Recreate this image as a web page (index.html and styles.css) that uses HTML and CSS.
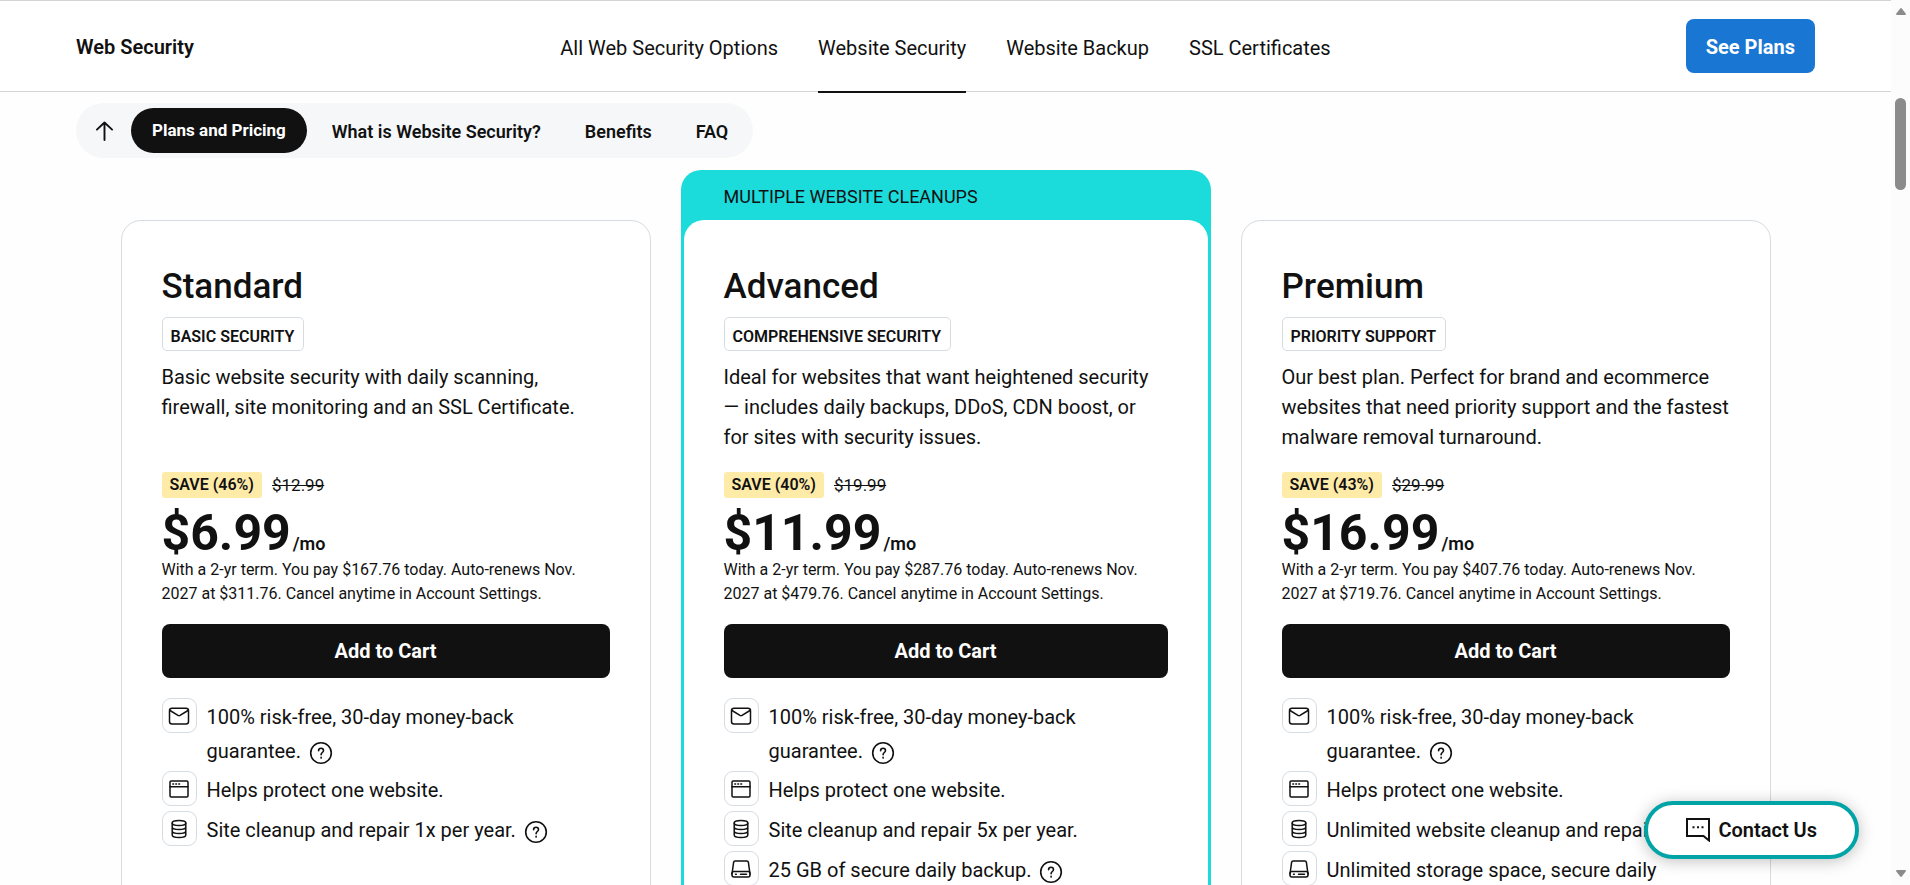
FILE: index.html
```html
<!DOCTYPE html>
<html lang="en">
<head>
<meta charset="utf-8">
<meta name="viewport" content="width=device-width, initial-scale=1">
<title>Website Security</title>
<link rel="stylesheet" href="styles.css">
</head>
<body>
<svg class="sprite" aria-hidden="true">
  <symbol id="mail" viewBox="0 0 24 24"><rect x="2.500" y="4.200" width="19" height="15.800" rx="2.500"/><path d="M3 6.500l8 4.900a2 2 0 0 0 2 0l8-4.900"/></symbol>
  <symbol id="window" viewBox="0 0 24 24"><rect x="3" y="4" width="18" height="16" rx="1.200"/><path d="M3 9.800h18M5.800 6.900h.8M8.800 6.900h.8M11.800 6.900h.8"/></symbol>
  <symbol id="database" viewBox="0 0 24 24"><ellipse cx="12" cy="6" rx="6.800" ry="2.500"/><path d="M5.200 6v12c0 1.400 3 2.500 6.800 2.500s6.800-1.100 6.800-2.500V6M5.200 10c0 1.400 3 2.500 6.800 2.500s6.800-1.100 6.800-2.500M5.200 14c0 1.400 3 2.500 6.800 2.500s6.800-1.100 6.800-2.500"/></symbol>
  <symbol id="drive" viewBox="0 0 24 24"><path d="M3 17L4.600 5.400A1.600 1.600 0 0 1 6.200 4h11.600a1.600 1.600 0 0 1 1.600 1.400L21 17"/><rect x="3" y="14.500" width="18" height="5.500" rx="2"/><path d="M6.500 17.200h.8M11.500 17.200h6"/></symbol>
  <symbol id="help" viewBox="0 0 24 24"><circle cx="12" cy="12" r="10.300"/><path d="M9.600 9.700c0-1.500 1-2.500 2.500-2.500s2.400 1 2.400 2.300c0 2-2.400 2-2.400 4.200M12.100 16.300v.8"/></symbol>
</svg>
<div class="window">
  <div class="page">
    <header class="topbar">
      <strong class="brand">Web Security</strong>
      <nav class="links" aria-label="Products">
        <a href="#all">All Web Security Options</a>
        <a href="#security" class="current" aria-current="page">Website Security</a>
        <a href="#backup">Website Backup</a>
        <a href="#ssl">SSL Certificates</a>
      </nav>
      <button type="button" class="button see-plans">See Plans</button>
    </header>
    <nav class="sections" aria-label="Sections">
      <a href="#top" class="up" aria-label="Back to top"><svg viewBox="0 0 20 20"><path d="M10 19.500V1M2 8.500L10 1l8 7.500"/></svg></a>
      <a href="#plans" class="active">Plans and Pricing</a>
      <a href="#what">What is Website Security?</a>
      <a href="#benefits">Benefits</a>
      <a href="#faq">FAQ</a>
    </nav>
    <main class="plans" id="plans">
      <section class="plan">
        <div class="card">
          <h2>Standard</h2>
          <p class="tag">BASIC SECURITY</p>
          <p class="about">Basic website security with daily scanning, firewall, site monitoring and an SSL Certificate.</p>
          <p class="deal"><span class="save">SAVE (46%)</span><s>$12.99</s></p>
          <p class="price"><b>$6.99</b><span>/mo</span></p>
          <p class="terms">With a 2-yr term. You pay $167.76 today. Auto-renews Nov. 2027 at $311.76. Cancel anytime in Account Settings.</p>
          <button type="button" class="button cart">Add to Cart</button>
          <ul class="features">
            <li><span class="chip"><svg><use href="#mail"/></svg></span><span class="label">100% risk-free, 30-day money-back guarantee. <button type="button" class="help" aria-label="More about the guarantee"><svg><use href="#help"/></svg></button></span></li>
            <li><span class="chip"><svg><use href="#window"/></svg></span><span class="label">Helps protect one website.</span></li>
            <li><span class="chip"><svg><use href="#database"/></svg></span><span class="label">Site cleanup and repair 1x per year. <button type="button" class="help" aria-label="More about cleanup"><svg><use href="#help"/></svg></button></span></li>
          </ul>
        </div>
      </section>
      <section class="plan featured">
        <p class="banner">MULTIPLE WEBSITE CLEANUPS</p>
        <div class="card">
          <h2>Advanced</h2>
          <p class="tag">COMPREHENSIVE SECURITY</p>
          <p class="about">Ideal for websites that want heightened security — includes daily backups, DDoS, CDN boost, or<br>for sites with security issues.</p>
          <p class="deal"><span class="save">SAVE (40%)</span><s>$19.99</s></p>
          <p class="price"><b>$11.99</b><span>/mo</span></p>
          <p class="terms">With a 2-yr term. You pay $287.76 today. Auto-renews Nov. 2027 at $479.76. Cancel anytime in Account Settings.</p>
          <button type="button" class="button cart">Add to Cart</button>
          <ul class="features">
            <li><span class="chip"><svg><use href="#mail"/></svg></span><span class="label">100% risk-free, 30-day money-back guarantee. <button type="button" class="help" aria-label="More about the guarantee"><svg><use href="#help"/></svg></button></span></li>
            <li><span class="chip"><svg><use href="#window"/></svg></span><span class="label">Helps protect one website.</span></li>
            <li><span class="chip"><svg><use href="#database"/></svg></span><span class="label">Site cleanup and repair 5x per year.</span></li>
            <li><span class="chip"><svg><use href="#drive"/></svg></span><span class="label">25 GB of secure daily backup. <button type="button" class="help" aria-label="More about backup"><svg><use href="#help"/></svg></button></span></li>
          </ul>
        </div>
      </section>
      <section class="plan">
        <div class="card">
          <h2>Premium</h2>
          <p class="tag">PRIORITY SUPPORT</p>
          <p class="about">Our best plan. Perfect for brand and ecommerce websites that need priority support and the fastest malware removal turnaround.</p>
          <p class="deal"><span class="save">SAVE (43%)</span><s>$29.99</s></p>
          <p class="price"><b>$16.99</b><span>/mo</span></p>
          <p class="terms">With a 2-yr term. You pay $407.76 today. Auto-renews Nov. 2027 at $719.76. Cancel anytime in Account Settings.</p>
          <button type="button" class="button cart">Add to Cart</button>
          <ul class="features">
            <li><span class="chip"><svg><use href="#mail"/></svg></span><span class="label">100% risk-free, 30-day money-back guarantee. <button type="button" class="help" aria-label="More about the guarantee"><svg><use href="#help"/></svg></button></span></li>
            <li><span class="chip"><svg><use href="#window"/></svg></span><span class="label">Helps protect one website.</span></li>
            <li><span class="chip"><svg><use href="#database"/></svg></span><span class="label">Unlimited website cleanup and repair.</span></li>
            <li><span class="chip"><svg><use href="#drive"/></svg></span><span class="label">Unlimited storage space, secure daily</span></li>
          </ul>
        </div>
      </section>
    </main>
    <button type="button" class="contact"><svg viewBox="0 0 24 24"><path class="bubble" d="M1 1h22v21.500L17.500 18H1z"/><path class="dots" d="M6.500 9.200h2M11 9.200h2M15.500 9.200h2"/></svg>Contact Us</button>
  </div>
  <div class="scrollbar" aria-hidden="true">
    <svg class="arrow" viewBox="0 0 10 7"><path d="M4 .8a1.200 1.200 0 0 1 2 0l3.700 4.700a1 1 0 0 1-.8 1.500H1.100a1 1 0 0 1-.8-1.500z"/></svg>
    <span class="thumb"></span>
    <svg class="arrow down" viewBox="0 0 10 7"><path d="M4 6.200a1.200 1.200 0 0 0 2 0l3.700-4.700A1 1 0 0 0 8.900 0H1.100a1 1 0 0 0-.8 1.500z"/></svg>
  </div>
</div>
</body>
</html>
```
FILE: styles.css
```css
* { box-sizing: border-box; }
body, h2, p, ul { margin: 0; padding: 0; }
body {
  font-family: Roboto, "Liberation Sans", sans-serif;
  font-size: 20px;
  line-height: 30px;
  color: #111;
  background: #fefefe;
}
a { color: inherit; text-decoration: none; }
button { font: inherit; color: inherit; border: 0; padding: 0; cursor: pointer; }
svg { display: block; fill: none; stroke: currentColor; stroke-linecap: round; stroke-linejoin: round; }
.sprite { position: absolute; width: 0; height: 0; }

.window { display: flex; height: 100vh; overflow: hidden; }
.page { position: relative; flex: 1; min-width: 0; overflow: hidden; }

.topbar {
  display: grid;
  grid-template-columns: 1fr auto 1fr;
  align-items: center;
  height: 92px;
  padding: 0 76px;
  background: #fff;
  border-top: 1px solid #d4d4d4;
  border-bottom: 1px solid #d4d4d4;
}
.brand { padding-top: 2px; font-weight: 600; }
.links { display: flex; gap: 40px; }
.links a { padding: 32px 0 28px; margin-bottom: -2px; border-bottom: 2px solid transparent; }
.links .current { border-color: #111; }
.button { height: 54px; border-radius: 8px; color: #fff; font-weight: 700; }
.see-plans { justify-self: end; padding: 2px 20px 0; background: #1976d2; }

.sections {
  display: flex;
  align-items: center;
  width: max-content;
  height: 55px;
  margin: 11px 0 0 76px;
  padding: 0 3px 0 5px;
  border-radius: 28px;
  background: #f5f7f8;
  font-size: 18px;
  font-weight: 600;
}
.sections a { padding: 2px 22px 0; }
.sections .up { padding: 0 17px 0 14px; }
.up svg { width: 19px; height: 20px; stroke-width: 2; }
.sections .active {
  margin-right: 3px;
  padding: 0 21px;
  line-height: 45px;
  border-radius: 23px;
  background: #111;
  color: #fff;
  font-size: 17px;
  font-weight: 700;
}

.plans {
  display: grid;
  grid-template-columns: repeat(3, 1fr);
  gap: 30px;
  max-width: 1650px;
  margin: 12px auto 0;
}
.plan { display: flex; flex-direction: column; padding-top: 50px; }
.card { flex: 1; padding: 41px 40px 40px; background: #fff; border: 1px solid #d6dce1; border-radius: 20px; }
.featured { padding: 0 3px 3px; border-radius: 20px; background: #1bdbdb; }
.featured .card { border: 0; padding-top: 42px; }
.banner { padding: 12px 40px 8px; font-size: 18px; }
h2 { font-size: 35px; line-height: 50px; font-weight: 500; }
.tag {
  width: max-content;
  height: 34px;
  margin-top: 5px;
  padding: 7px 9px 0 8px;
  border: 1px solid #d6dce1;
  border-radius: 5px;
  font-size: 16px;
  line-height: 24px;
  font-weight: 600;
}
.about { min-height: 90px; margin-top: 11px; }
.deal { display: flex; align-items: center; gap: 10px; margin-top: 20px; font-size: 17px; line-height: 26px; }
.save { padding: 0 8px; border-radius: 3px; background: #ffeba8; font-size: 16px; font-weight: 600; }
.price { display: flex; align-items: baseline; gap: 2px; padding-top: 21px; line-height: 28px; }
.price b { font-size: 50px; }
.price span { font-size: 18px; font-weight: 600; }
.terms { font-size: 16px; line-height: 24px; }
.cart { display: block; width: 100%; margin-top: 18px; background: #111; }
.features { list-style: none; display: grid; gap: 3px; margin-top: 20px; }
.features li { display: flex; gap: 10px; min-height: 37px; line-height: 34px; }
.label { padding-top: 2px; }
.chip { display: grid; place-items: center; flex: none; width: 35px; height: 35px; border: 1px solid #d6dce1; border-radius: 9px; }
.chip svg { width: 24px; height: 24px; stroke-width: 1.5; }
.help { margin-left: 3px; background: none; vertical-align: middle; }
.help svg { width: 24px; height: 24px; stroke-width: 1.6; }

.contact {
  position: absolute;
  right: 32px;
  bottom: 26px;
  display: flex;
  align-items: center;
  gap: 8px;
  height: 58px;
  padding: 0 38px;
  border: 4px solid #00a4a6;
  border-radius: 29px;
  background: #fff;
  box-shadow: 0 2px 16px rgba(0, 0, 0, .25);
  font-weight: 600;
}
.contact svg { width: 24px; height: 24px; stroke-width: 2; stroke-linejoin: miter; }
.contact .dots { stroke-linecap: butt; }

.scrollbar { display: flex; flex-direction: column; align-items: center; width: 19px; padding: 8px 0; background: #fcfcfc; }
.arrow { width: 10px; height: 7px; fill: #8b8b8b; stroke: none; }
.arrow.down { margin-top: auto; }
.thumb { width: 11px; height: 92px; margin-top: 83px; border-radius: 6px; background: #8b8b8b; }
```
